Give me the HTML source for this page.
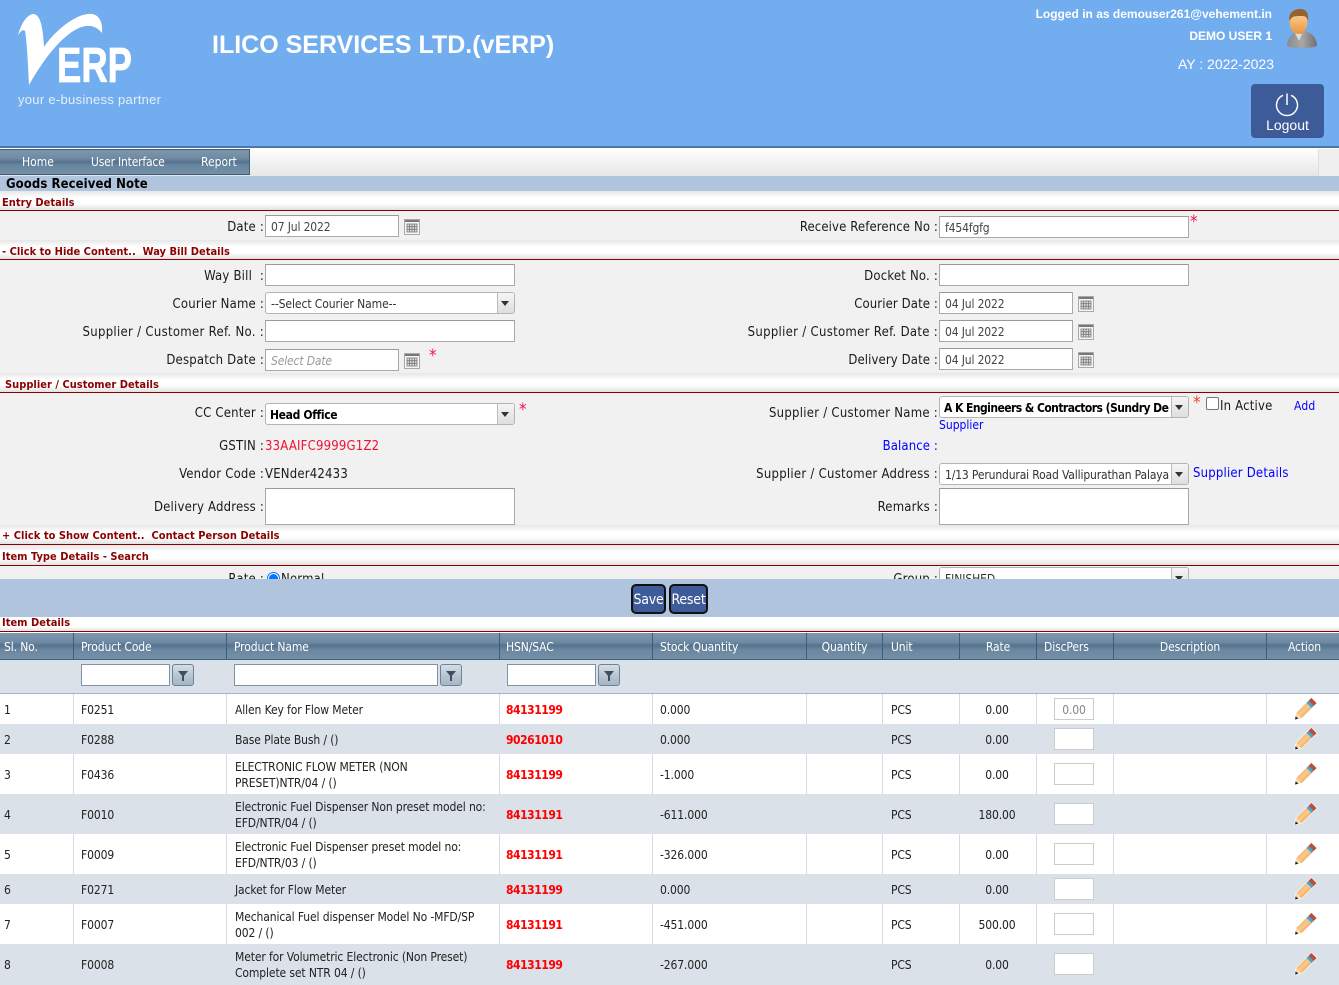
<!DOCTYPE html>
<html><head><meta charset="utf-8"><title>Goods Received Note</title>
<style>
html,body{margin:0;padding:0;width:1339px;height:985px;overflow:hidden;background:#f1f1f1}
body{position:relative;font-family:"DejaVu Sans Condensed","Liberation Sans",sans-serif;font-size:12px;color:#111}
div,span{position:absolute;box-sizing:border-box;white-space:nowrap}
.a{font-family:"Liberation Sans",sans-serif;color:#fff}
.band{left:0;width:1339px;background:linear-gradient(#e6e6e6,#fff 35%,#fff 65%,#e2e2e2);border-bottom:1px solid #8b0000}
.bt{left:2px;margin-top:1px;font:bold 11px "DejaVu Sans Condensed","Liberation Sans",sans-serif;color:#8b0000;letter-spacing:.02px}
.l{margin-top:1px;font-size:13px;line-height:16px;text-align:right;letter-spacing:.2px;color:#1a1a1a}
.sup{letter-spacing:.3px}
.rr{letter-spacing:.12px}
.i{background:#fff;border:1px solid #a9a9a9;border-top-color:#999;font-size:12px;line-height:23px;letter-spacing:-.15px;padding-left:5px;color:#444;overflow:hidden}
.s{background:#fff;border:1px solid #b4b4b4;border-radius:3px;font-size:12px;line-height:23px;letter-spacing:-.08px;padding-left:5px;color:#333;overflow:hidden}
.s i{position:absolute;right:0;top:0;bottom:0;width:16px;background:linear-gradient(#f5f5f5,#dedede);border-left:1px solid #bbb}
.s i:after{content:"";position:absolute;left:3px;top:8px;border:4px solid transparent;border-top:5px solid #333;border-bottom:0}
.star{color:#f0144b;font-size:17px;line-height:17px}
.cal{width:16px;height:16px}
.th{top:633px;height:27px;background:linear-gradient(#7e96ae,#6f8aa3 35%,#54738e 48%,#6b87a0 65%,#7290a8);border-bottom:1px solid #44607c;border-right:1px solid #3f5c7a;color:#fff;line-height:29px;padding-left:7px;font-size:12px;letter-spacing:-.12px}
.c{text-align:center;padding-left:0}
.r{left:0;width:1339px}
.v{width:1px;background:#d6dce2}
.t{margin-top:1px;font-size:12px;line-height:15px;color:#222;letter-spacing:-.12px}
.h{font-weight:bold;color:#f00;font-size:12px;letter-spacing:-.45px}
.d{left:1054px;width:40px;height:22px;background:#fff;border:1px solid #ccc;color:#888;text-align:center;line-height:22px;font-size:12px;letter-spacing:-.12px}
.fb{width:22px;height:22px;border:1px solid #6d8298;border-radius:3px;background:linear-gradient(#d5dee6,#b9c7d4 50%,#a6b6c6)}
.fb:after{content:"";position:absolute;left:5px;top:6px;border:5px solid transparent;border-top:6px solid #3f4f60;border-bottom:0}
.fb:before{content:"";position:absolute;left:9px;top:10px;width:2px;height:6px;background:#3f4f60}
.fi{top:664px;height:22px;background:#fff;border:1px solid #7f93a7}
.p{left:1293px;width:24px;height:24px;margin-top:1px}
</style></head><body>

<svg width="0" height="0" style="position:absolute"><defs>
<linearGradient id="pb" x1="0" y1="0" x2="1" y2="1"><stop offset="0" stop-color="#ee9a50"/><stop offset=".5" stop-color="#fbc98a"/><stop offset="1" stop-color="#d97f30"/></linearGradient>
<symbol id="cal" viewBox="0 0 16 16"><rect x=".5" y=".5" width="15" height="15" fill="#f4f4f4" stroke="#aaa"/><rect x="1" y="1" width="14" height="2" fill="#777"/><path d="M3 5h10v8H3z" fill="#ddd" stroke="#777" stroke-width=".8"/><path d="M5.500 5v8M8 5v8M10.500 5v8M3 7.700h10M3 10.300h10" stroke="#777" stroke-width=".8"/></symbol>
<symbol id="pen" viewBox="0 0 24 24">
<path d="M2 22.500L3.400 15.900 18.400.9 23.600 6.100 8.600 21.100Z" fill="#fff" stroke="#fff" stroke-width="1.200" stroke-linejoin="round"/>
<path d="M2 22.500L3.400 15.900 8.600 21.100Z" fill="#f8dca8"/>
<path d="M2 22.500L2.700 19.200 5.300 21.800Z" fill="#16204a"/>
<path d="M3.400 15.900L13.400 5.900 18.600 11.100 8.600 21.100Z" fill="url(#pb)"/>
<path d="M13.400 5.900L15.400 3.900 20.600 9.100 18.600 11.100Z" fill="#3fa6dc"/>
<path d="M15.400 3.900L18.400.9 23.600 6.100 20.600 9.100Z" fill="#b9503a"/>
</symbol>
<linearGradient id="sk" x1="0" y1="0" x2="0" y2="1"><stop offset="0" stop-color="#fbd8a8"/><stop offset="1" stop-color="#ee9438"/></linearGradient>
<linearGradient id="su" x1="0" y1="0" x2="1" y2="0"><stop offset="0" stop-color="#8a8a8a"/><stop offset=".5" stop-color="#a8a8a8"/><stop offset="1" stop-color="#707070"/></linearGradient>
</defs></svg>

<!-- header -->
<div style="left:0;top:0;width:1339px;height:146px;background:#71adef"></div>
<div style="left:0;top:146px;width:1339px;height:2px;background:#4a76a8"></div>
<svg style="position:absolute;left:0;top:0" width="180" height="115">
<path d="M18 36C20 26 26 15 33 14C40 14 43 26 44 47C55 30 78 12 92 14C100 15 103 24 102 33C95 24 85 24 75 30C58 40 42 62 29 85C28 65 27 42 25 31C23 29 20 31 18 36Z" fill="#fff"/>
<text x="57" y="82" font-family="Liberation Sans" font-weight="bold" font-size="49" fill="#fff" stroke="#fff" stroke-width=".8" textLength="75" lengthAdjust="spacingAndGlyphs">ERP</text>
<text x="18" y="104" font-family="Liberation Sans" font-size="13" fill="#e4eefb" textLength="143">your e-business partner</text>
</svg>
<div class="a" style="left:212px;top:30px;font-weight:bold;font-size:25px;line-height:30px">ILICO SERVICES LTD.(vERP)</div>
<div class="a" style="right:67px;top:7px;font-weight:bold;font-size:12px;line-height:15px">Logged in as demouser261@vehement.in</div>
<div class="a" style="right:67px;top:28px;font-weight:bold;font-size:12px;line-height:15px;margin-top:1px">DEMO USER 1</div>
<div class="a" style="right:65px;top:56px;font-size:14px;line-height:16px">AY : 2022-2023</div>
<svg style="position:absolute;left:1284px;top:8px" width="36" height="42">
<path d="M3 38C3 30 8 26 14 22L24 24C30 27 33 32 33 38C24 41 10 41 3 38Z" fill="url(#su)"/>
<path d="M11 25L15 33L18 26z" fill="#ddd"/>
<ellipse cx="14.500" cy="14" rx="9" ry="12" fill="url(#sk)"/>
<path d="M5.500 13C4 5 10 1 16 1C23 1 25 6 24 13C23 9 21 8 18 8C13 8 10 8 8 9.500C7 10.500 6 12 5.500 13Z" fill="#96622f"/>
</svg>
<div style="left:1251px;top:84px;width:73px;height:54px;background:#3d5b98;border-radius:4px"></div>
<svg style="position:absolute;left:1274px;top:92px" width="26" height="26"><path d="M9 3.300A10.500 10.500 0 1 0 17 3.300" fill="none" stroke="#fff" stroke-width="1.500"/><path d="M13 1.500V13" stroke="#fff" stroke-width="1.500"/></svg>
<div class="a" style="left:1251px;width:73px;top:117px;text-align:center;font-size:14px;line-height:16px">Logout</div>

<!-- menu -->
<div style="left:0;top:148px;width:1339px;height:28px;background:linear-gradient(#fff,#e6e6e6)"></div>
<div style="left:1318px;top:149px;width:21px;height:27px;background:#f0f0f0;border-left:1px solid #ddd"></div>
<div style="left:0;top:149px;width:250px;height:26px;background:linear-gradient(#7e96ae,#6f8aa3 35%,#54738e 50%,#6b87a0 65%,#7290a8);border:1px solid #3f5c7a;border-left:0"></div>
<div style="left:22px;top:155px;color:#fff;line-height:15px">Home</div>
<div style="left:91px;top:155px;color:#fff;line-height:15px;letter-spacing:-.2px">User Interface</div>
<div style="left:201px;top:155px;color:#fff;line-height:15px">Report</div>

<!-- title -->
<div style="left:0;top:176px;width:1339px;height:15px;background:#b0c4de"></div>
<div style="left:6px;top:176px;font-weight:bold;font-size:13px;line-height:17px;color:#000;letter-spacing:.08px">Goods Received Note</div>

<!-- entry -->
<div class="band" style="top:191px;height:20px"></div><div class="bt" style="top:195px">Entry Details</div>
<div class="l" style="right:1075px;top:219px">Date :</div>
<div class="i" style="left:265px;top:215px;width:134px;height:22px">07 Jul 2022</div>
<svg class="cal" style="position:absolute;left:404px;top:219px"><use href="#cal"/></svg>
<div class="l rr" style="right:401px;top:219px">Receive Reference No :</div>
<div class="i" style="left:939px;top:216px;width:250px;height:22px">f454fgfg</div>
<div class="star" style="left:1190px;top:214px">*</div>

<!-- way bill -->
<div class="band" style="top:240px;height:20px"></div><div class="bt" style="top:244px">- Click to Hide Content..&nbsp; Way Bill Details</div>
<div class="l" style="right:1075px;top:268px">Way Bill &nbsp;:</div>
<div class="i" style="left:265px;top:264px;width:250px;height:22px"></div>
<div class="l" style="right:401px;top:268px">Docket No. :</div>
<div class="i" style="left:939px;top:264px;width:250px;height:22px"></div>
<div class="l" style="right:1075px;top:296px">Courier Name :</div>
<div class="s" style="left:265px;top:292px;width:250px;height:22px">--Select Courier Name--<i></i></div>
<div class="l rr" style="right:401px;top:296px">Courier Date :</div>
<div class="i" style="left:939px;top:292px;width:134px;height:22px">04 Jul 2022</div>
<svg class="cal" style="position:absolute;left:1078px;top:296px"><use href="#cal"/></svg>
<div class="l sup" style="right:1075px;top:324px">Supplier / Customer Ref. No. :</div>
<div class="i" style="left:265px;top:320px;width:250px;height:22px"></div>
<div class="l sup" style="right:401px;top:324px">Supplier / Customer Ref. Date :</div>
<div class="i" style="left:939px;top:320px;width:134px;height:22px">04 Jul 2022</div>
<svg class="cal" style="position:absolute;left:1078px;top:324px"><use href="#cal"/></svg>
<div class="l" style="right:1075px;top:352px">Despatch Date :</div>
<div class="i" style="left:265px;top:349px;width:134px;height:22px;color:#999;font-style:italic">Select Date</div>
<svg class="cal" style="position:absolute;left:404px;top:353px"><use href="#cal"/></svg>
<div class="star" style="left:429px;top:348px">*</div>
<div class="l rr" style="right:401px;top:352px">Delivery Date :</div>
<div class="i" style="left:939px;top:348px;width:134px;height:22px">04 Jul 2022</div>
<svg class="cal" style="position:absolute;left:1078px;top:352px"><use href="#cal"/></svg>

<!-- supplier -->
<div class="band" style="top:373px;height:20px"></div><div class="bt" style="left:5px;top:377px">Supplier / Customer Details</div>
<div class="l" style="right:1075px;top:405px">CC Center :</div>
<div class="s" style="left:265px;top:403px;width:250px;height:22px;font-weight:bold;color:#000;padding-left:4px;letter-spacing:-.35px">Head Office<i></i></div>
<div class="star" style="left:519px;top:402px">*</div>
<div class="l" style="right:401px;top:405px;letter-spacing:.26px">Supplier / Customer Name :</div>
<div class="s" style="left:939px;top:396px;width:250px;height:22px;font-weight:bold;color:#000;padding-left:4px;letter-spacing:-.55px">A K Engineers &amp; Contractors (Sundry De<i></i></div>
<div class="star" style="left:1193px;top:395px;color:#f04020">*</div>
<div style="left:1206px;top:397px;width:13px;height:13px;background:#fff;border:1px solid #767676;border-radius:2px"></div>
<div class="l" style="left:1220px;top:398px">In Active</div>
<div class="l" style="left:1294px;top:398px;color:#00f;font-size:12px;margin-top:0">Add</div>
<div class="t" style="left:939px;top:417px;color:#00f;letter-spacing:0">Supplier</div>
<div class="l" style="right:1075px;top:438px">GSTIN :</div>
<div class="l" style="left:265px;top:438px;color:#f01030">33AAIFC9999G1Z2</div>
<div class="l rr" style="right:401px;top:438px;color:#00f">Balance :</div>
<div class="l" style="right:1075px;top:466px">Vendor Code :</div>
<div class="l" style="left:265px;top:466px">VENder42433</div>
<div class="l" style="right:401px;top:466px;letter-spacing:.26px">Supplier / Customer Address :</div>
<div class="s" style="left:939px;top:463px;width:250px;height:22px;letter-spacing:-.15px">1/13 Perundurai Road Vallipurathan Palaya<i></i></div>
<div class="l" style="left:1193px;top:465px;color:#00f">Supplier Details</div>
<div class="l" style="right:1075px;top:499px">Delivery Address :</div>
<div class="i" style="left:265px;top:488px;width:250px;height:37px"></div>
<div class="l" style="right:401px;top:499px">Remarks :</div>
<div class="i" style="left:939px;top:488px;width:250px;height:37px"></div>

<!-- contact + item type -->
<div class="band" style="top:525px;height:20px"></div><div class="bt" style="top:528px">+ Click to Show Content..&nbsp; Contact Person Details</div>
<div class="band" style="top:545px;height:21px"></div><div class="bt" style="top:549px">Item Type Details - Search</div>
<div class="l" style="right:1075px;top:571px">Rate :</div>
<div style="left:267px;top:572px;width:13px;height:13px;border-radius:50%;background:#fff;border:1px solid #0075ff"></div>
<div style="left:269px;top:574px;width:9px;height:9px;border-radius:50%;background:#0075ff"></div>
<div class="l" style="left:281px;top:571px">Normal</div>
<div class="l" style="right:401px;top:571px">Group :</div>
<div class="s" style="left:939px;top:567px;width:250px;height:22px">FINISHED<i></i></div>

<!-- action bar -->
<div style="left:0;top:579px;width:1339px;height:38px;background:#b0c4de"></div>
<div style="left:631px;top:584px;width:35px;height:30px;background:#3f5c9a;border:2px solid #111;border-radius:5px;color:#fff;text-align:center;line-height:28px;font-size:14px;letter-spacing:-.2px">Save</div>
<div style="left:669px;top:584px;width:39px;height:30px;background:#3f5c9a;border:2px solid #111;border-radius:5px;color:#fff;text-align:center;line-height:28px;font-size:14px;letter-spacing:-.2px">Reset</div>

<!-- item details -->
<div class="band" style="top:617px;height:15px;background:linear-gradient(#fff,#fff 70%,#e2e2e2)"></div><div class="bt" style="top:615px">Item Details</div>
<div style="left:0;top:632px;width:1339px;height:1px;background:#fff"></div>

<!-- table header -->
<div class="th" style="left:0;width:74px;padding-left:4px">Sl. No.</div>
<div class="th" style="left:74px;width:153px">Product Code</div>
<div class="th" style="left:227px;width:273px">Product Name</div>
<div class="th" style="left:500px;width:153px;padding-left:6px">HSN/SAC</div>
<div class="th" style="left:653px;width:154px">Stock Quantity</div>
<div class="th c" style="left:807px;width:76px">Quantity</div>
<div class="th" style="left:883px;width:77px;padding-left:8px">Unit</div>
<div class="th c" style="left:960px;width:77px">Rate</div>
<div class="th" style="left:1037px;width:77px">DiscPers</div>
<div class="th c" style="left:1114px;width:153px">Description</div>
<div class="th c" style="left:1267px;width:75px;border-right:0">Action</div>

<!-- filter row -->
<div class="r" style="top:660px;height:34px;background:#dbe1e8;border-bottom:1px solid #a3b6c9"></div>
<div class="fi" style="left:81px;width:89px"></div><div class="fb" style="left:172px;top:664px"></div>
<div class="fi" style="left:234px;width:204px"></div><div class="fb" style="left:440px;top:664px"></div>
<div class="fi" style="left:507px;width:89px"></div><div class="fb" style="left:598px;top:664px"></div>

<!-- rows -->
<div class="r" style="top:694px;height:30px;background:#fff"></div>
<div class="r" style="top:724px;height:30px;background:#dbe1e8"></div>
<div class="r" style="top:754px;height:40px;background:#fff"></div>
<div class="r" style="top:794px;height:40px;background:#dbe1e8"></div>
<div class="r" style="top:834px;height:40px;background:#fff"></div>
<div class="r" style="top:874px;height:30px;background:#dbe1e8"></div>
<div class="r" style="top:904px;height:40px;background:#fff"></div>
<div class="r" style="top:944px;height:41px;background:#dbe1e8"></div>
<div class="v" style="left:73px;top:694px;height:30px"></div><div class="v" style="left:226px;top:694px;height:30px"></div><div class="v" style="left:499px;top:694px;height:30px"></div><div class="v" style="left:652px;top:694px;height:30px"></div><div class="v" style="left:806px;top:694px;height:30px"></div><div class="v" style="left:882px;top:694px;height:30px"></div><div class="v" style="left:959px;top:694px;height:30px"></div><div class="v" style="left:1036px;top:694px;height:30px"></div><div class="v" style="left:1113px;top:694px;height:30px"></div><div class="v" style="left:1266px;top:694px;height:30px"></div>
<div class="v" style="left:73px;top:754px;height:40px"></div><div class="v" style="left:226px;top:754px;height:40px"></div><div class="v" style="left:499px;top:754px;height:40px"></div><div class="v" style="left:652px;top:754px;height:40px"></div><div class="v" style="left:806px;top:754px;height:40px"></div><div class="v" style="left:882px;top:754px;height:40px"></div><div class="v" style="left:959px;top:754px;height:40px"></div><div class="v" style="left:1036px;top:754px;height:40px"></div><div class="v" style="left:1113px;top:754px;height:40px"></div><div class="v" style="left:1266px;top:754px;height:40px"></div>
<div class="v" style="left:73px;top:834px;height:40px"></div><div class="v" style="left:226px;top:834px;height:40px"></div><div class="v" style="left:499px;top:834px;height:40px"></div><div class="v" style="left:652px;top:834px;height:40px"></div><div class="v" style="left:806px;top:834px;height:40px"></div><div class="v" style="left:882px;top:834px;height:40px"></div><div class="v" style="left:959px;top:834px;height:40px"></div><div class="v" style="left:1036px;top:834px;height:40px"></div><div class="v" style="left:1113px;top:834px;height:40px"></div><div class="v" style="left:1266px;top:834px;height:40px"></div>
<div class="v" style="left:73px;top:904px;height:40px"></div><div class="v" style="left:226px;top:904px;height:40px"></div><div class="v" style="left:499px;top:904px;height:40px"></div><div class="v" style="left:652px;top:904px;height:40px"></div><div class="v" style="left:806px;top:904px;height:40px"></div><div class="v" style="left:882px;top:904px;height:40px"></div><div class="v" style="left:959px;top:904px;height:40px"></div><div class="v" style="left:1036px;top:904px;height:40px"></div><div class="v" style="left:1113px;top:904px;height:40px"></div><div class="v" style="left:1266px;top:904px;height:40px"></div>

<div class="t" style="left:4px;top:702px">1</div><div class="t" style="left:81px;top:702px">F0251</div><div class="t" style="left:235px;top:702px">Allen Key for Flow Meter</div><div class="t h" style="left:506px;top:702px">84131199</div><div class="t" style="left:660px;top:702px">0.000</div><div class="t" style="left:891px;top:702px">PCS</div><div class="t" style="left:959px;width:76px;text-align:center;top:702px">0.00</div><div class="d" style="top:698px">0.00</div><svg class="p" style="position:absolute;top:696px"><use href="#pen"/></svg>

<div class="t" style="left:4px;top:732px">2</div><div class="t" style="left:81px;top:732px">F0288</div><div class="t" style="left:235px;top:732px">Base Plate Bush / ()</div><div class="t h" style="left:506px;top:732px">90261010</div><div class="t" style="left:660px;top:732px">0.000</div><div class="t" style="left:891px;top:732px">PCS</div><div class="t" style="left:959px;width:76px;text-align:center;top:732px">0.00</div><div class="d" style="top:728px"></div><svg class="p" style="position:absolute;top:726px"><use href="#pen"/></svg>

<div class="t" style="left:4px;top:767px">3</div><div class="t" style="left:81px;top:767px">F0436</div><div class="t" style="left:235px;top:758px;line-height:16px">ELECTRONIC FLOW METER (NON<br>PRESET)NTR/04 / ()</div><div class="t h" style="left:506px;top:767px">84131199</div><div class="t" style="left:660px;top:767px">-1.000</div><div class="t" style="left:891px;top:767px">PCS</div><div class="t" style="left:959px;width:76px;text-align:center;top:767px">0.00</div><div class="d" style="top:763px"></div><svg class="p" style="position:absolute;top:761px"><use href="#pen"/></svg>

<div class="t" style="left:4px;top:807px">4</div><div class="t" style="left:81px;top:807px">F0010</div><div class="t" style="left:235px;top:798px;line-height:16px">Electronic Fuel Dispenser Non preset model no:<br>EFD/NTR/04 / ()</div><div class="t h" style="left:506px;top:807px">84131191</div><div class="t" style="left:660px;top:807px">-611.000</div><div class="t" style="left:891px;top:807px">PCS</div><div class="t" style="left:959px;width:76px;text-align:center;top:807px">180.00</div><div class="d" style="top:803px"></div><svg class="p" style="position:absolute;top:801px"><use href="#pen"/></svg>

<div class="t" style="left:4px;top:847px">5</div><div class="t" style="left:81px;top:847px">F0009</div><div class="t" style="left:235px;top:838px;line-height:16px">Electronic Fuel Dispenser preset model no:<br>EFD/NTR/03 / ()</div><div class="t h" style="left:506px;top:847px">84131191</div><div class="t" style="left:660px;top:847px">-326.000</div><div class="t" style="left:891px;top:847px">PCS</div><div class="t" style="left:959px;width:76px;text-align:center;top:847px">0.00</div><div class="d" style="top:843px"></div><svg class="p" style="position:absolute;top:841px"><use href="#pen"/></svg>

<div class="t" style="left:4px;top:882px">6</div><div class="t" style="left:81px;top:882px">F0271</div><div class="t" style="left:235px;top:882px">Jacket for Flow Meter</div><div class="t h" style="left:506px;top:882px">84131199</div><div class="t" style="left:660px;top:882px">0.000</div><div class="t" style="left:891px;top:882px">PCS</div><div class="t" style="left:959px;width:76px;text-align:center;top:882px">0.00</div><div class="d" style="top:878px"></div><svg class="p" style="position:absolute;top:876px"><use href="#pen"/></svg>

<div class="t" style="left:4px;top:917px">7</div><div class="t" style="left:81px;top:917px">F0007</div><div class="t" style="left:235px;top:908px;line-height:16px">Mechanical Fuel dispenser Model No -MFD/SP<br>002 / ()</div><div class="t h" style="left:506px;top:917px">84131191</div><div class="t" style="left:660px;top:917px">-451.000</div><div class="t" style="left:891px;top:917px">PCS</div><div class="t" style="left:959px;width:76px;text-align:center;top:917px">500.00</div><div class="d" style="top:913px"></div><svg class="p" style="position:absolute;top:911px"><use href="#pen"/></svg>

<div class="t" style="left:4px;top:957px">8</div><div class="t" style="left:81px;top:957px">F0008</div><div class="t" style="left:235px;top:948px;line-height:16px">Meter for Volumetric Electronic (Non Preset)<br>Complete set NTR 04 / ()</div><div class="t h" style="left:506px;top:957px">84131199</div><div class="t" style="left:660px;top:957px">-267.000</div><div class="t" style="left:891px;top:957px">PCS</div><div class="t" style="left:959px;width:76px;text-align:center;top:957px">0.00</div><div class="d" style="top:953px"></div><svg class="p" style="position:absolute;top:951px"><use href="#pen"/></svg>

</body></html>
